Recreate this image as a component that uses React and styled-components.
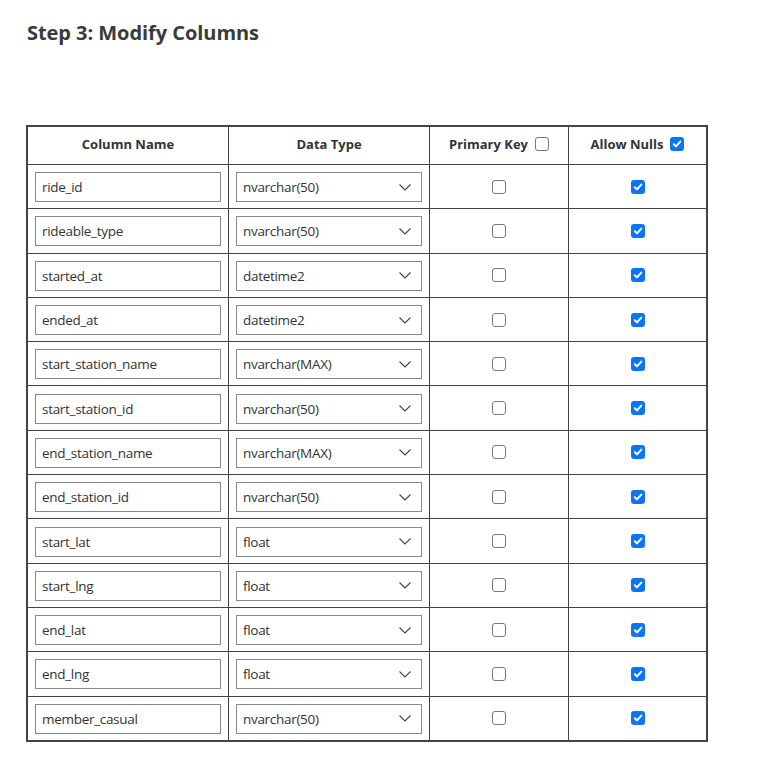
import React from "react";
import styled, { createGlobalStyle } from "styled-components";

const Global = createGlobalStyle`
  body { margin: 0; background: #fff; font-family: "Open Sans", "Noto Sans", sans-serif; color: #333; }
`;

const Page = styled.div`
  padding: 18px 0 30px 26px;
`;

const Title = styled.h2`
  margin: 0 0 77px 1px;
  font-size: 20px;
  font-weight: 700;
  color: #3a3a3a;
  letter-spacing: -0.05px;
  line-height: 30px;
`;

const Table = styled.table`
  border-collapse: collapse;
  border: 2px solid #444;
  table-layout: fixed;
`;

const Th = styled.th`
  border: 1px solid #444;
  height: 33px;
  padding: 0 0 4px;
  font-size: 13px;
  font-weight: 700;
  color: #333;
  text-align: center;
  width: ${(p) => p.$w}px;
`;

const HeadInner = styled.span`
  display: inline-flex;
  align-items: center;
  gap: 7px;
`;

const Td = styled.td`
  border: 1px solid #444;
  height: 43.3px;
  padding: 0 7px;
  text-align: ${(p) => (p.$center ? "center" : "left")};
  vertical-align: middle;
`;

const Field = styled.div`
  box-sizing: border-box;
  height: 30px;
  border: 1px solid #8a8a8a;
  display: flex;
  align-items: center;
  justify-content: space-between;
  padding: 0 10px 0 6px;
  font-size: 13.5px;
  color: #333;
  letter-spacing: -0.3px;
  margin-top: 1px;
`;

const Box = styled.span`
  box-sizing: border-box;
  display: flex;
  align-items: center;
  justify-content: center;
  margin: 0 auto;
  width: 14px;
  height: 14px;
  border-radius: 3px;
  border: ${(p) => (p.$checked ? "none" : "1.5px solid #777")};
  background: ${(p) => (p.$checked ? "#0b75f5" : "#fff")};
`;

const Check = ({ checked }) => (
  <Box $checked={checked}>
    {checked && (
      <svg width="10" height="10" viewBox="0 0 10 10">
        <path d="M1.8 5.2 L4 7.4 L8.3 2.6" fill="none" stroke="#fff" strokeWidth="2" strokeLinecap="round" strokeLinejoin="round" />
      </svg>
    )}
  </Box>
);

const Chevron = () => (
  <svg width="12" height="7" viewBox="0 0 12 7">
    <path d="M0.5 0.5 L6 6 L11.5 0.5" fill="none" stroke="#444" strokeWidth="1.1" />
  </svg>
);

const rows = [
  ["ride_id", "nvarchar(50)"],
  ["rideable_type", "nvarchar(50)"],
  ["started_at", "datetime2"],
  ["ended_at", "datetime2"],
  ["start_station_name", "nvarchar(MAX)"],
  ["start_station_id", "nvarchar(50)"],
  ["end_station_name", "nvarchar(MAX)"],
  ["end_station_id", "nvarchar(50)"],
  ["start_lat", "float"],
  ["start_lng", "float"],
  ["end_lat", "float"],
  ["end_lng", "float"],
  ["member_casual", "nvarchar(50)"],
];

export default function App() {
  return (
    <Page>
      <Global />
      <Title>Step 3: Modify Columns</Title>
      <Table>
        <thead>
          <tr>
            <Th $w={200}>Column Name</Th>
            <Th $w={200}>Data Type</Th>
            <Th $w={138}>
              <HeadInner>
                Primary Key <Check checked={false} />
              </HeadInner>
            </Th>
            <Th $w={137}>
              <HeadInner>
                Allow Nulls <Check checked />
              </HeadInner>
            </Th>
          </tr>
        </thead>
        <tbody>
          {rows.map(([name, type]) => (
            <tr key={name}>
              <Td>
                <Field>{name}</Field>
              </Td>
              <Td>
                <Field>
                  {type}
                  <Chevron />
                </Field>
              </Td>
              <Td $center>
                <Check checked={false} />
              </Td>
              <Td $center>
                <Check checked />
              </Td>
            </tr>
          ))}
        </tbody>
      </Table>
    </Page>
  );
}
